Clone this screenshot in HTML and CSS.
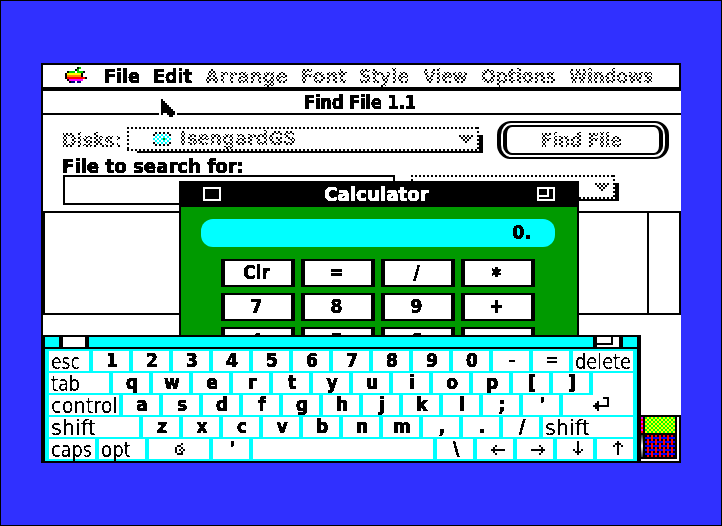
FILE: index.html
```html
<!DOCTYPE html>
<html lang="en">
<head>
<meta charset="utf-8">
<title>Find File</title>
<link rel="stylesheet" href="styles.css">
</head>
<body>
<svg class="defs" width="0" height="0">
  <!-- removes the soft edges of glyphs -->
  <filter id="crisp" x="-0.1" y="-0.1" width="1.2" height="1.2" color-interpolation-filters="sRGB">
    <feComponentTransfer>
      <feFuncR type="discrete" tableValues="0 1"/><feFuncG type="discrete" tableValues="0 1"/>
      <feFuncB type="discrete" tableValues="0 1"/><feFuncA type="discrete" tableValues="0 1"/>
    </feComponentTransfer>
  </filter>
</svg>
<main class="screen">
  <nav class="menubar">
    <svg class="apple" width="22" height="16" viewBox="0 0 11 8" shape-rendering="crispEdges">
      <path fill="#000" d="M1 2h9v1H9v2h2v1H9v1H8v1H2V7H1V6H0V3h1z"/>
      <path fill="#0c0" d="M7 0h1v1H7zM6 1h1v1H6zM2 2h3v1H2zM6 2h3v1H6z"/>
      <path fill="#ff0" d="M1 3h7v1H1z"/><path fill="#f80" d="M1 4h7v1H1z"/>
      <path fill="#f00" d="M1 5h9v1H1z"/><path fill="#f0f" d="M2 6h7v1H2z"/>
      <path fill="#008" d="M3 7h2v1H3zM6 7h2v1H6z"/><path fill="#000" d="M6 0h1v1H6zM5 1h1v1H5z"/>
      <path fill="#fff" d="M5 2h1v1H5zM5 7h1v1H5z"/>
    </svg>
    <svg class="word file" width="36" height="24"><text y="18" textLength="36" lengthAdjust="spacingAndGlyphs">File</text></svg>
    <svg class="word" width="40" height="24"><text y="18" textLength="39" lengthAdjust="spacingAndGlyphs">Edit</text></svg>
    <svg class="word dim" width="84" height="24"><text y="18" textLength="83" lengthAdjust="spacingAndGlyphs">Arrange</text></svg>
    <svg class="word dim" width="46" height="24"><text y="18" textLength="46" lengthAdjust="spacingAndGlyphs">Font</text></svg>
    <svg class="word dim" width="52" height="24"><text y="18" textLength="50" lengthAdjust="spacingAndGlyphs">Style</text></svg>
    <svg class="word dim" width="46" height="24"><text y="18" textLength="45" lengthAdjust="spacingAndGlyphs">View</text></svg>
    <svg class="word dim" width="76" height="24"><text y="18" textLength="75" lengthAdjust="spacingAndGlyphs">Options</text></svg>
    <svg class="word dim" width="88" height="24"><text y="18" textLength="84" lengthAdjust="spacingAndGlyphs">Windows</text></svg>
  </nav>
  <section class="finder">
    <header class="finder-title"><svg class="word" width="112" height="22"><text y="18" textLength="112" lengthAdjust="spacingAndGlyphs">Find File 1.1</text></svg></header>
    <div class="row disks">
      <svg class="word dim disk-label" width="62" height="24"><text y="20" textLength="60" lengthAdjust="spacingAndGlyphs">Disks:</text></svg>
      <div class="popup wide">
        <div class="face">
          <svg class="disk" width="22" height="14" viewBox="0 0 11 7" shape-rendering="crispEdges">
            <defs><pattern id="media" width="2" height="2" patternUnits="userSpaceOnUse"><path fill="#0ff" d="M0 0h1v1H0zM1 1h1v1H1z"/></pattern></defs>
            <path fill="url(#media)" d="M1 1h9v5H1z"/>
            <path d="M2 0h1v1H2zM4 0h1v1H4zM6 0h1v1H6zM8 0h1v1H8zM1 1h1v1H1zM9 1h1v1H9zM1 5h1v1H1zM9 5h1v1H9zM2 6h1v1H2zM4 6h1v1H4zM6 6h1v1H6zM8 6h1v1H8z"/>
            <path fill="#090" d="M6 3h1v1H6z"/>
          </svg>
          <svg class="word dim" width="118" height="24"><text y="18" textLength="116" lengthAdjust="spacingAndGlyphs">IsengardGS</text></svg>
          <svg class="arrow" width="14" height="10" viewBox="0 0 14 10"><path d="M0 0h14v4h-2v2h-2v2H4V6H2V4H0z"/></svg>
        </div>
      </div>
      <button class="find"><span><svg class="word dim" width="84" height="26"><text y="20" textLength="81" lengthAdjust="spacingAndGlyphs">Find File</text></svg></span></button>
    </div>
    <div class="label"><svg class="word" width="184" height="18"><text y="14" textLength="182" lengthAdjust="spacingAndGlyphs">File to search for:</text></svg></div>
    <div class="row">
      <div class="input"></div>
      <div class="popup small"><div class="face"><svg class="arrow" width="14" height="10" viewBox="0 0 14 10"><path d="M0 0h14v4h-2v2h-2v2H4V6H2V4H0z"/></svg></div></div>
    </div>
    <div class="results"><div class="list"></div><div class="scroll"></div></div>
  </section>

  <section class="calc">
    <header>
      <i class="box"></i>
      <svg class="word" width="106" height="22"><text y="18" textLength="105" lengthAdjust="spacingAndGlyphs">Calculator</text></svg>
      <i class="box zoom"></i>
    </header>
    <div class="display"><span class="px">0.</span></div>
    <div class="pad">
      <b>Clr</b><b>=</b><b>/</b><b class="star">*</b>
      <b>7</b><b>8</b><b>9</b><b>+</b>
      <b>4</b><b>5</b><b>6</b><b>-</b>
    </div>
  </section>

  <section class="palette">
    <i class="pink"></i><i class="lime"></i><i class="gray"></i>
    <svg width="30" height="22" shape-rendering="crispEdges">
      <defs><pattern id="weave" width="8" height="8" patternUnits="userSpaceOnUse">
        <path d="M0 0h8v8H0z"/><path fill="#00f" d="M0 2h8v2H0zM0 6h8v2H0z"/>
        <path fill="#f00" d="M2 0h2v2H2zM2 4h2v4H2zM6 0h2v6H6z"/>
      </pattern></defs>
      <path fill="url(#weave)" d="M0 0h30v22H0z"/>
    </svg>
  </section>

  <section class="keyboard">
    <header><i class="kclose"></i><i class="kzoom"></i></header>
    <div class="keys">
      <div class="krow">
        <kbd class="w40 name"><svg width="30" height="20"><text y="18" textLength="29" lengthAdjust="spacingAndGlyphs">esc</text></svg></kbd>
        <kbd>1</kbd><kbd>2</kbd><kbd>3</kbd><kbd>4</kbd><kbd>5</kbd><kbd>6</kbd><kbd>7</kbd><kbd>8</kbd><kbd>9</kbd><kbd>0</kbd><kbd class="thin">–</kbd><kbd class="thin">=</kbd>
        <kbd class="w60 name"><svg width="57" height="20"><text y="18" textLength="56" lengthAdjust="spacingAndGlyphs">delete</text></svg></kbd>
      </div>
      <div class="krow">
        <kbd class="w60 name"><svg width="30" height="20"><text y="18" textLength="29" lengthAdjust="spacingAndGlyphs">tab</text></svg></kbd>
        <kbd>q</kbd><kbd>w</kbd><kbd>e</kbd><kbd>r</kbd><kbd>t</kbd><kbd>y</kbd><kbd>u</kbd><kbd>i</kbd><kbd>o</kbd><kbd>p</kbd><kbd>[</kbd><kbd>]</kbd>
        <kbd class="w40 ret"></kbd>
      </div>
      <div class="krow">
        <kbd class="w70 name"><svg width="68" height="20"><text y="18" textLength="67" lengthAdjust="spacingAndGlyphs">control</text></svg></kbd>
        <kbd>a</kbd><kbd>s</kbd><kbd>d</kbd><kbd>f</kbd><kbd>g</kbd><kbd>h</kbd><kbd>j</kbd><kbd>k</kbd><kbd>l</kbd><kbd>;</kbd><kbd>'</kbd>
        <kbd class="w70 icon enter"><svg width="16" height="14" viewBox="0 0 8 7" shape-rendering="crispEdges"><path d="M5 0h3v5H3v2H2V6H1V5H0V4h1V3h1V2h1v2h4V1H5z"/></svg></kbd>
      </div>
      <div class="krow">
        <kbd class="w90 name"><svg width="46" height="20"><text y="18" textLength="45" lengthAdjust="spacingAndGlyphs">shift</text></svg></kbd>
        <kbd>z</kbd><kbd>x</kbd><kbd>c</kbd><kbd>v</kbd><kbd>b</kbd><kbd>n</kbd><kbd>m</kbd><kbd>,</kbd><kbd>.</kbd><kbd>/</kbd>
        <kbd class="w90 name"><svg width="46" height="20"><text y="18" textLength="45" lengthAdjust="spacingAndGlyphs">shift</text></svg></kbd>
      </div>
      <div class="krow">
        <kbd class="w46 name"><svg width="42" height="20"><text y="18" textLength="41" lengthAdjust="spacingAndGlyphs">caps</text></svg></kbd>
        <kbd class="w46 name"><svg width="30" height="20"><text y="18" textLength="30" lengthAdjust="spacingAndGlyphs">opt</text></svg></kbd>
        <kbd class="w60 icon oa"><svg width="10" height="12" viewBox="0 0 5 6" shape-rendering="crispEdges"><path d="M3 0h1v1H3zM1 1h2v1H1zM0 2h1v3H0zM3 2h1v1H3zM2 3h1v1H2zM4 3h1v1H4zM3 4h1v1H3zM1 5h3v1H1z"/></svg></kbd>
        <kbd>'</kbd><kbd class="space"></kbd><kbd>\</kbd>
        <kbd class="icon side"><svg width="14" height="10" viewBox="0 0 7 5" shape-rendering="crispEdges"><path d="M2 0h1v1H2zM1 1h1v1H1zM0 2h7v1H0zM1 3h1v1H1zM2 4h1v1H2z"/></svg></kbd>
        <kbd class="icon side"><svg width="14" height="10" viewBox="0 0 7 5" shape-rendering="crispEdges"><path d="M4 0h1v1H4zM5 1h1v1H5zM0 2h7v1H0zM5 3h1v1H5zM4 4h1v1H4z"/></svg></kbd>
        <kbd class="icon vert"><svg width="10" height="14" viewBox="0 0 5 7" shape-rendering="crispEdges"><path d="M2 0h1v7H2zM0 4h1v1H0zM1 5h1v1H1zM3 5h1v1H3zM4 4h1v1H4z"/></svg></kbd>
        <kbd class="icon vert"><svg width="10" height="14" viewBox="0 0 5 7" shape-rendering="crispEdges"><path d="M2 0h1v7H2zM0 2h1v1H0zM1 1h1v1H1zM3 1h1v1H3zM4 2h1v1H4z"/></svg></kbd>
      </div>
    </div>
  </section>

  <svg class="cursor" width="18" height="20" viewBox="-1 -1 9 10" shape-rendering="crispEdges">
    <path fill="#fff" d="M-1 6h9v3H-1z"/>
    <path d="M0 0h1v1h1v1h1v1h1v1h1v1h1v1h1v1h0v1H6v1H4V8H3V7H1v1H0z"/>
  </svg>
</main>
</body>
</html>
```
FILE: styles.css
```css
* { box-sizing: border-box; }
body {
  margin: 0; width: 722px; height: 526px; overflow: hidden;
  padding: 62px 40px; border: 1px solid #000; background: #3030ff;
  font: bold 19px/20px "DejaVu Sans Condensed", "DejaVu Sans", sans-serif; color: #000;
}
i { display: block; }
svg { display: block; flex: none; overflow: visible; }
.defs { position: absolute; }
.screen { position: relative; width: 640px; height: 400px; background: #fff; border-left: 2px solid #000; }
.word, .px, .pad b, .name svg { filter: url(#crisp); }
.word text { font-family: "DejaVu Sans", sans-serif; fill: currentColor; stroke: currentColor; stroke-width: .7px; }
.dim {
  -webkit-mask: repeating-conic-gradient(#000 0 25%, transparent 0 50%) 0 0 / 4px 4px;
  mask: repeating-conic-gradient(#000 0 25%, transparent 0 50%) 0 0 / 4px 4px;
}
.arrow {
  -webkit-mask: repeating-conic-gradient(#000 0 25%, transparent 0 50%) 2px 0 / 4px 4px;
  mask: repeating-conic-gradient(#000 0 25%, transparent 0 50%) 2px 0 / 4px 4px;
}
.word.dim text { stroke-width: .3px; }
.menubar {
  display: flex; gap: 12px; height: 28px; padding-left: 22px;
  border: solid #000; border-width: 2px 2px 4px 0;
}
.apple { margin-top: 2px; }
.file { margin: 0 1px 0 5px; }
.finder-title { height: 24px; padding-left: 261px; border-bottom: 2px solid #000; }
.row { display: flex; }
.disks { height: 44px; padding: 6px 0 0 19px; }
.disk-label { margin: 6px 3px 0 0; }
.popup {
  margin-top: 6px; padding: 0 4px 2px 0;
  background: linear-gradient(#000, #000) 100% 100% / 4px calc(100% - 8px) no-repeat,
    linear-gradient(#000, #000) 10px 100% / 100% 2px no-repeat;
}
.face {
  display: flex; height: 24px; background:
    repeating-linear-gradient(90deg, #000 0 2px, transparent 2px 4px) 0 0 / 100% 2px no-repeat,
    repeating-linear-gradient(90deg, #000 0 2px, transparent 2px 4px) 0 100% / 100% 2px no-repeat,
    repeating-linear-gradient(#000 0 2px, transparent 2px 4px) 0 0 / 2px 100% no-repeat,
    repeating-linear-gradient(#000 0 2px, transparent 2px 4px) 100% 0 / 2px 100% no-repeat, #fff;
}
.wide { width: 356px; height: 26px; }
.wide .face { padding-left: 24px; }
.wide .arrow { margin: 8px 0 0 161px; }
.disk { margin: 5px 7px 0 0; }
.find {
  width: 172px; height: 38px; margin-left: 14px; padding: 2px;
  border: solid #000; border-width: 2px 4px; border-radius: 14px; background: #fff; color: inherit; font: inherit;
}
.find span {
  display: flex; height: 30px; padding-left: 34px;
  border: solid #000; border-width: 2px 4px; border-radius: 9px;
}
.label { height: 16px; padding-left: 19px; }
.input { width: 332px; height: 30px; margin: 0 16px 0 20px; border: 2px solid #000; }
.small { width: 208px; height: 26px; margin-top: 0; }
.small .face { padding-left: 184px; }
.small .arrow { margin-top: 8px; }
.results { display: flex; height: 104px; margin-top: 6px; border: 2px solid #000; }
.list { flex: 1; }
.scroll { width: 32px; border-left: 2px solid #000; }

.calc {
  position: absolute; left: 136px; top: 118px; width: 400px; height: 156px; overflow: hidden;
  background: #009a00; border: solid #000; border-width: 0 2px;
}
.calc header { display: flex; height: 26px; padding: 2px 22px; background: #000; color: #fff; }
.calc header .word { margin: 0 107px 0 103px; }
.box { width: 18px; height: 14px; margin-top: 4px; border: 2px solid #fff; }
.zoom::before { content: ""; display: block; width: 8px; height: 6px; border: solid #fff; border-width: 0 2px 2px 0; }
.px { display: inline-block; height: 20px; vertical-align: top; }
.display {
  width: 354px; height: 28px; margin: 12px 0 0 20px; padding: 3px 24px 0 0;
  border-radius: 12px; background: #0ff; text-align: right;
}
.pad { display: grid; grid-template-columns: repeat(4, 74px); gap: 6px; margin: 12px 0 0 40px; }
.pad b { height: 28px; border: solid #000; border-width: 2px 4px; background: #fff; text-align: center; padding: 1px 3px 0 0; }
.pad b, .px, kbd { -webkit-text-stroke: .7px currentColor; }
.pad .star { font-size: 21px; line-height: 28px; }

.palette {
  position: absolute; left: 596px; top: 352px; width: 42px; height: 48px;
  display: grid; grid-template: 16px 22px / 2px 30px; gap: 2px;
  border: 2px solid #000; background: linear-gradient(#000, #000) 0 0 / 36px 42px no-repeat, #fff;
}
.pink { background: repeating-linear-gradient(#f0f 0 2px, #f00 2px 4px); }
.lime { background: repeating-conic-gradient(#ff0 0 25%, #0f0 0 50%) 0 0 / 4px 4px; }
.gray { background: linear-gradient(#333, #fff, #333); }

.keyboard {
  position: absolute; left: -2px; top: 272px; width: 600px; height: 128px;
  border: solid #000; border-width: 2px 4px; background: #0ff;
}
.keyboard header { display: flex; justify-content: space-between; height: 12px; padding: 0 14px; border-bottom: 2px solid #000; }
.kclose, .kzoom { width: 30px; background: #fff; border: solid #000; border-width: 0 4px; }
.kzoom::before { content: ""; display: block; width: 14px; height: 6px; border: solid #000; border-width: 0 2px 2px 0; }
.keys { display: grid; gap: 2px; padding: 2px 4px; }
.krow { display: flex; gap: 4px; }
kbd {
  display: block; flex: none; width: 36px; height: 20px; background: #fff;
  font: inherit; line-height: 18px; text-align: center; padding-left: 2px; filter: url(#crisp);
}
.thin { -webkit-text-stroke: 0; font-size: 18px; }
.w40 { width: 40px; } .w46 { width: 46px; } .w60 { width: 60px; } .w70 { width: 70px; } .w90 { width: 90px; }
.space { width: 180px; }
.name { filter: none; }
.name text { font: 21px "DejaVu Sans Condensed", "DejaVu Sans", sans-serif; -webkit-text-stroke: .2px #000; }
.ret { height: 22px; margin-bottom: -2px; }
.icon { filter: none; }
.enter { padding: 2px 0 0 30px; }
.oa { padding: 4px 0 0 26px; }
.side { padding: 6px 0 0 14px; }
.vert { padding: 2px 0 0 16px; }
.cursor { position: absolute; left: 116px; top: 34px; }
```
